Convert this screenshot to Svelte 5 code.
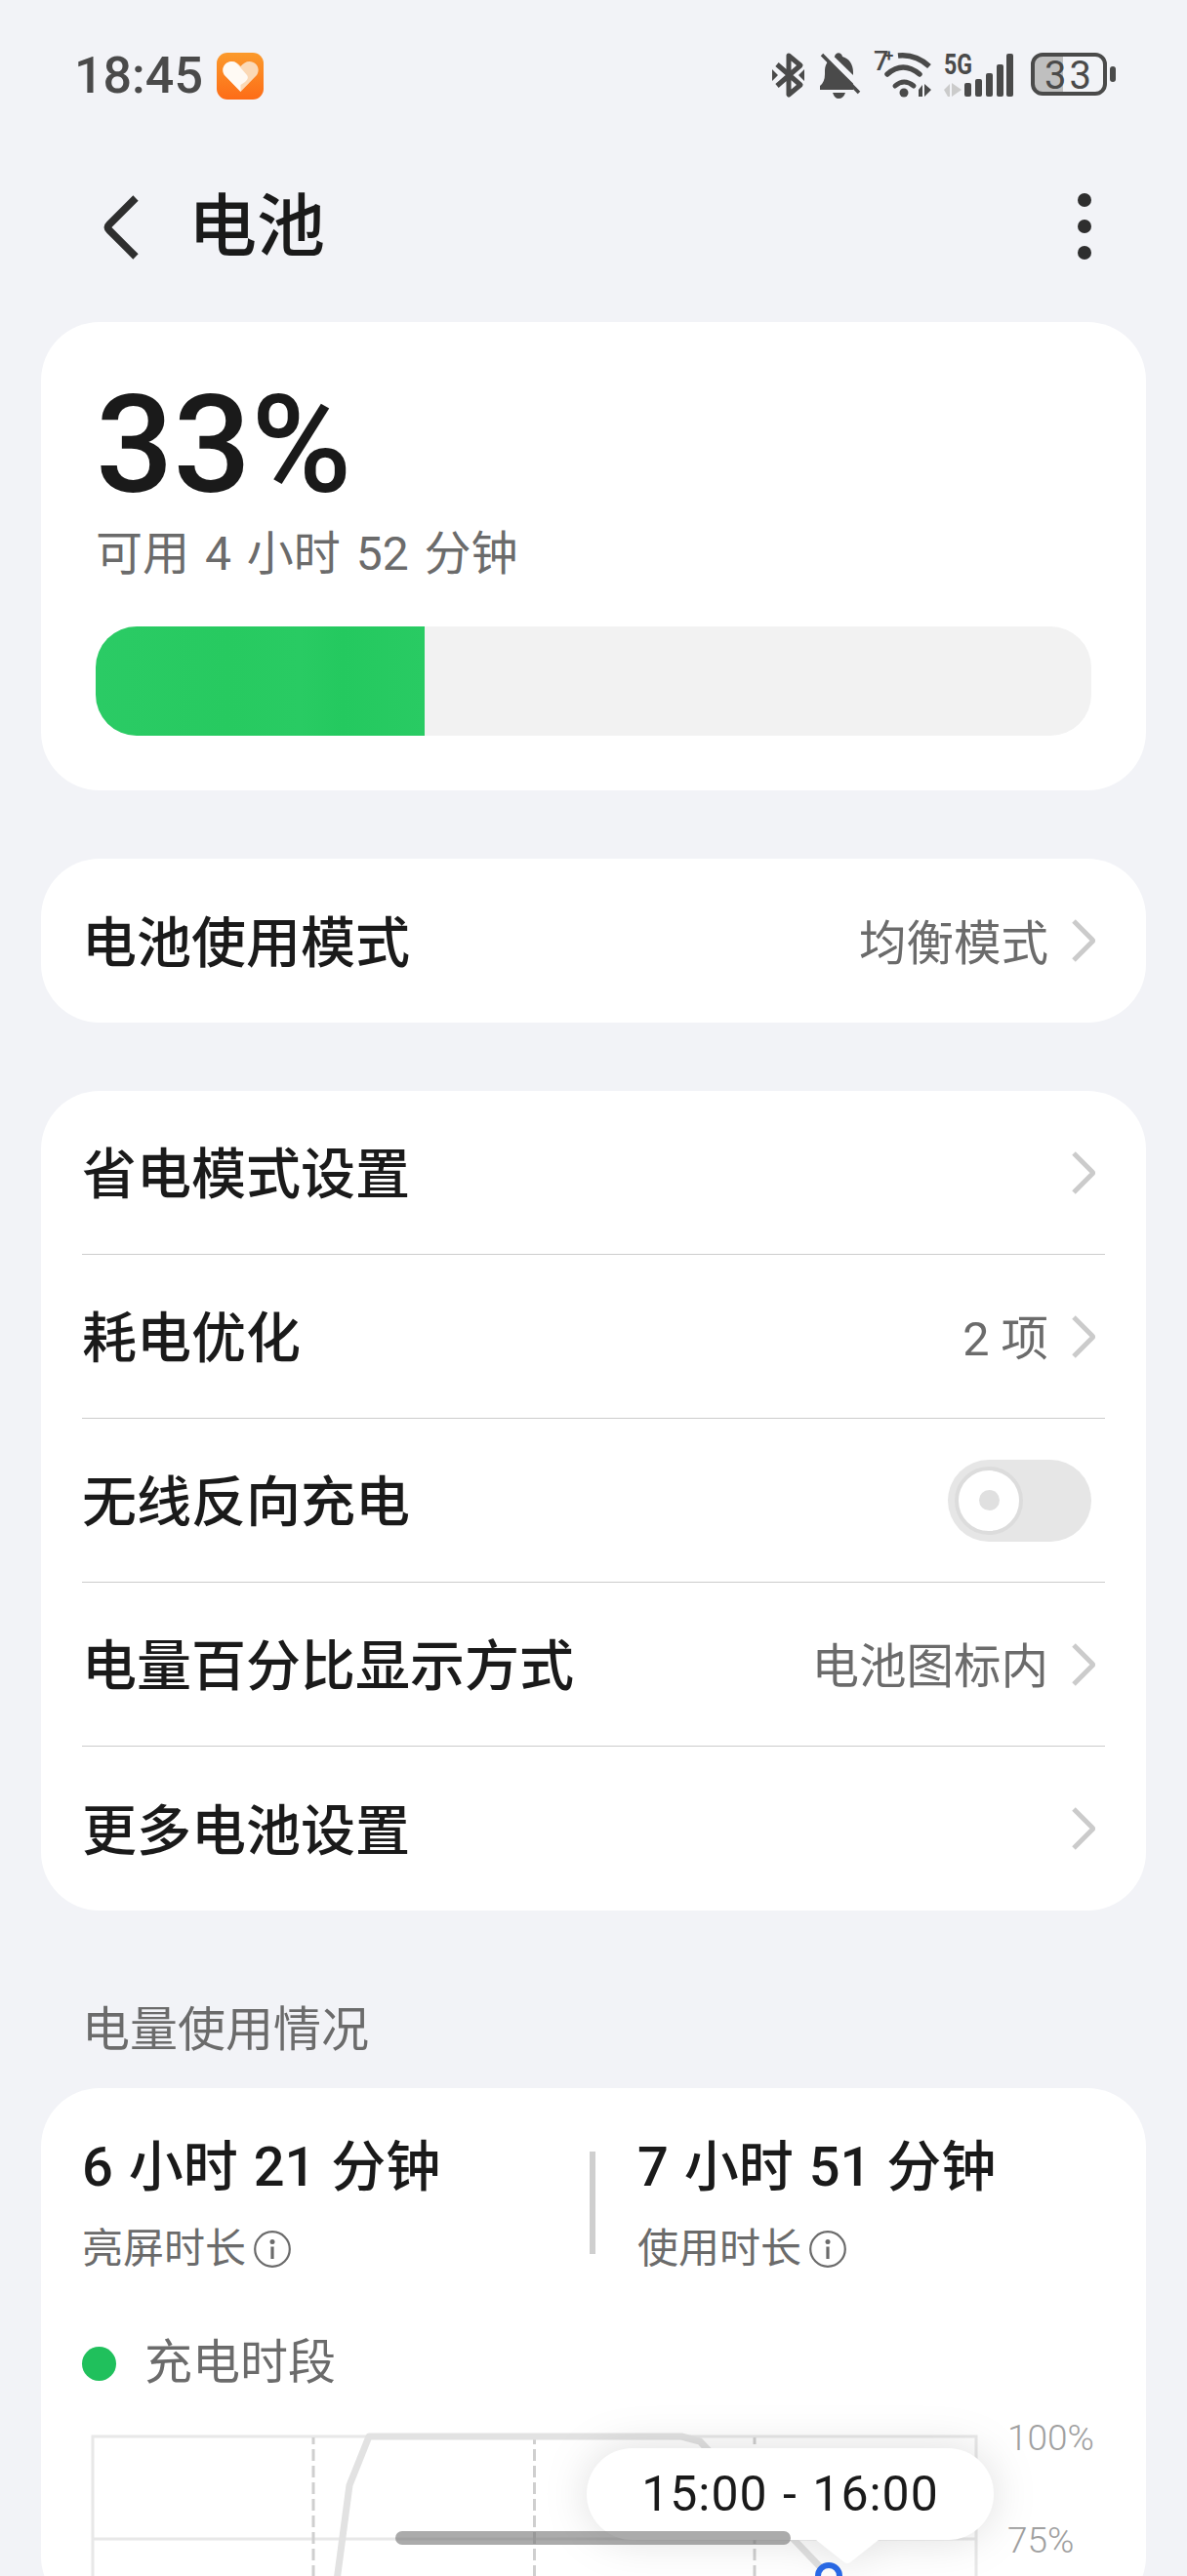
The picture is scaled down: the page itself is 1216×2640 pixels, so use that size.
<script>
  const rows = [
    { label: '省电模式设置', value: '' },
    { label: '耗电优化', value: '2 项' },
    { label: '无线反向充电', toggle: true },
    { label: '电量百分比显示方式', value: '电池图标内' },
    { label: '更多电池设置', value: '' }
  ];

  const stats = [
    { time: '6 小时 21 分钟', label: '亮屏时长' },
    { time: '7 小时 51 分钟', label: '使用时长' }
  ];

  // dashed hour markers of the chart, in page x
  const hours = [321, 547.5, 773];
</script>

{#snippet chevron()}
  <svg class="chev" width="24" height="44" viewBox="0 0 24 44" aria-hidden="true">
    <path d="M2 2 L21 21 Q22 22 21 23 L2 42" fill="none" stroke="#cbcbcb" stroke-width="5"/>
  </svg>
{/snippet}

{#snippet info()}
  <svg width="38" height="38" viewBox="0 0 38 38" aria-hidden="true">
    <circle cx="19" cy="19" r="17.8" fill="none" stroke="#6b6b6b" stroke-width="2.2"/>
    <circle cx="19" cy="11.5" r="2.5" fill="#6b6b6b"/>
    <rect x="17.4" y="16.5" width="3.2" height="12.5" fill="#6b6b6b"/>
  </svg>
{/snippet}

<div class="page">
  <div class="status">
    <div class="st-left">
      <span class="time">18:45</span>
      <svg width="48" height="48" viewBox="0 0 48 48" aria-hidden="true">
        <defs>
          <linearGradient id="appbg" x1="0" y1="0" x2="0" y2="1">
            <stop offset="0" stop-color="#fb9a2c"/>
            <stop offset="1" stop-color="#fd6c17"/>
          </linearGradient>
        </defs>
        <rect width="48" height="48" rx="11" fill="url(#appbg)"/>
        <path d="M24.5 40 L8 23 C3.5 16 9 9 15.5 9 C19 9 22 11 24.5 14 C27 11 30 9 33.5 9 C40 9 45.5 16 41 23 Z" fill="#fbd9b6"/>
        <path d="M24.5 40 L8 23 C3.5 16 9 9 15.5 9 C18 9 20 10 21.5 12 L31 23 C33 26 31 28 29 30 L24.5 33 Z" fill="#fff" opacity="0.85"/>
      </svg>
    </div>
    <svg class="st-right" width="365" height="66" viewBox="785 40 365 66" aria-hidden="true">
      <!-- bluetooth -->
      <path d="M796 66 L820 87 L808 97 V57 L820 67 L796 88" fill="none" stroke="#4a4a4a" stroke-width="5" stroke-linejoin="round"/>
      <path d="M791 71 L797 77 L791 83 Z M824 71 L818 77 L824 83 Z" fill="#4a4a4a"/>
      <!-- muted bell -->
      <path d="M840 92 V88 Q845 84 845 76 V72 C845 64 851 60 855 58 C856 53 862 53 863 58 C870 60 874 66 874 74 V92 Z" fill="#4a4a4a"/>
      <path d="M853 95 H866 Q864 101 859 101 Q855 101 853 95 Z" fill="#4a4a4a"/>
      <path d="M846 54 L886 93" stroke="#f2f3f7" stroke-width="6"/>
      <path d="M842 56 L880 95" stroke="#4a4a4a" stroke-width="3.5"/>
      <!-- wifi -->
      <text x="895" y="72" class="s7">7</text>
      <text x="906" y="63" class="splus">+</text>
      <path d="M920 57 Q938 55 952 68" fill="none" stroke="#4a4a4a" stroke-width="5.5"/>
      <path d="M909 76 Q925 62 942 76" fill="none" stroke="#4a4a4a" stroke-width="5.5" stroke-linecap="round"/>
      <path d="M917 88 Q926 80 936 88" fill="none" stroke="#4a4a4a" stroke-width="5" stroke-linecap="round"/>
      <circle cx="926" cy="95" r="4.5" fill="#4a4a4a"/>
      <path d="M941 92 L945 87 V99 H941 Z M947 86 V99 L954 92 Z" fill="#4a4a4a"/>
      <!-- 5G -->
      <text x="967" y="76" class="s5g" textLength="29" lengthAdjust="spacingAndGlyphs">5G</text>
      <path d="M967 92 L973 86 V99 H971 Z M975 85 V99 L985 92 Z" fill="#cbcbcb"/>
      <!-- signal -->
      <rect x="988" y="85" width="7" height="14" rx="2" fill="#4a4a4a"/>
      <rect x="999" y="81" width="7" height="18" rx="2" fill="#4a4a4a"/>
      <rect x="1010" y="75" width="7" height="24" rx="2" fill="#4a4a4a"/>
      <rect x="1021" y="66" width="7" height="33" rx="2" fill="#4a4a4a"/>
      <rect x="1031" y="55" width="7" height="44" rx="2" fill="#4a4a4a"/>
      <!-- battery -->
      <path d="M1089 56 H1068 Q1058 56 1058 66 V86 Q1058 96 1068 96 H1089 Z" fill="#bfbfbf"/>
      <rect x="1058" y="56" width="74" height="40" rx="10" fill="none" stroke="#4a4a4a" stroke-width="4"/>
      <text x="1095.5" y="91" class="s33" text-anchor="middle">33</text>
      <rect x="1137" y="68" width="6" height="16" rx="3" fill="#4a4a4a"/>
    </svg>
  </div>

  <div class="header">
    <svg width="38" height="66" viewBox="0 0 38 66" aria-hidden="true">
      <path d="M34 3 L7 30 Q4 33 7 36 L34 63" fill="none" stroke="#2e2e2e" stroke-width="7.5"/>
    </svg>
    <h1>电池</h1>
    <div class="more">
      <span></span><span></span><span></span>
    </div>
  </div>

  <section class="card hero">
    <div class="pct">33%</div>
    <div class="remain">可用 4 小时 52 分钟</div>
    <div class="bar"><div class="fill" style="width: 33%"></div></div>
  </section>

  <section class="card">
    <div class="row last">
      <span class="label">电池使用模式</span>
      <span class="value">均衡模式</span>
      {@render chevron()}
    </div>
  </section>

  <section class="card">
    {#each rows as r, i}
      <div class="row" class:last={i === rows.length - 1}>
        <span class="label">{r.label}</span>
        {#if r.toggle}
          <div class="toggle"><div class="knob"><i></i></div></div>
        {:else}
          {#if r.value}<span class="value">{r.value}</span>{/if}
          {@render chevron()}
        {/if}
      </div>
    {/each}
  </section>

  <div class="section-title">电量使用情况</div>

  <section class="card usage">
    <div class="stats">
      {#each stats as s, i}
        {#if i > 0}<div class="vline"></div>{/if}
        <div class="stat">
          <div class="stat-time">{s.time}</div>
          <div class="stat-label">{s.label}{@render info()}</div>
        </div>
      {/each}
    </div>

    <div class="legend"><i class="dot"></i>充电时段</div>

    <div class="chart">
      <!-- viewBox keeps page coordinates so the curve reads off the screenshot -->
      <svg width="1048" height="210" viewBox="84 2470 1048 210" aria-hidden="true">
        <path d="M95 2680 V2497 H1000 V2680" fill="none" stroke="#e8e8e8" stroke-width="3"/>
        <path d="M95 2602 H1000" stroke="#e8e8e8" stroke-width="3"/>
        {#each hours as x}
          <path d="M{x} 2498 V2680" stroke="#cfcfcf" stroke-width="3" stroke-dasharray="12 5" stroke-dashoffset="5"/>
        {/each}
        <path d="M345 2645 L358 2547 L378 2497 H698 L717 2502 L849 2640" fill="none" stroke="#e2e2e2" stroke-width="7" stroke-linejoin="round"/>
        <circle cx="849" cy="2640" r="11" fill="#fff" stroke="#2a6bea" stroke-width="6"/>
        <text x="1032" y="2511" class="pct-axis">100%</text>
        <text x="1032" y="2616" class="pct-axis">75%</text>
      </svg>
      <div class="tip">
        <div class="bubble">15:00 - 16:00</div>
        <svg class="notch" width="64" height="25" viewBox="0 0 64 25" aria-hidden="true">
          <path d="M0 0 H64 L35 23 Q32 25 29 23 Z" fill="#fff"/>
        </svg>
      </div>
    </div>
  </section>

  <div class="scrollbar"></div>
</div>

<style>
  :global(body) { margin: 0; background: #f2f3f7; }
  .page {
    position: relative;
    width: 1216px;
    height: 2640px;
    overflow: hidden;
    background: #f2f3f7;
    font-family: Roboto, "Noto Sans CJK SC", sans-serif;
    color: #1a1a1a;
  }

  .status {
    display: flex;
    justify-content: space-between;
    align-items: flex-start;
    height: 102px;
    padding: 40px 66px 0 76px;
    box-sizing: border-box;
  }
  .st-left { display: flex; align-items: center; gap: 14px; margin-top: 14px; height: 48px; }
  .time { font-size: 52px; line-height: 48px; font-weight: 500; color: #4a4a4a; }
  .st-right { display: block; }
  .s7 { font: 500 27px Roboto, sans-serif; fill: #4a4a4a; }
  .splus { font: 700 17px Roboto, sans-serif; fill: #4a4a4a; }
  .s5g { font: 700 29px Roboto, sans-serif; fill: #4a4a4a; }
  .s33 { font: 400 40px Roboto, sans-serif; letter-spacing: 3px; fill: #4a4a4a; }

  .header {
    display: flex;
    align-items: center;
    height: 194px;
    margin-top: 34px;
    padding: 0 98px 0 105px;
  }
  h1 { margin: 0 0 0 50px; flex: 1; font-size: 70px; line-height: 84px; font-weight: 500; }
  .more { display: flex; flex-direction: column; gap: 13px; margin-bottom: 2px; }
  .more span { width: 14px; height: 14px; border-radius: 50%; background: #2e2e2e; }

  .card {
    margin: 70px 42px 0;
    background: #fff;
    border-radius: 60px;
  }
  .hero { margin-top: 0; padding: 59px 56px 56px; }
  .pct { font-size: 140px; line-height: 135px; font-weight: 500; }
  .remain { margin-top: 14px; font-size: 48px; line-height: 60px; word-spacing: 4px; color: #6b6b6b; }
  .bar { margin-top: 44px; height: 112px; border-radius: 42px; background: #f2f2f2; overflow: hidden; }
  .fill {
    height: 100%;
    background: linear-gradient(90deg, #2bcb65 0%, #27ca60 40%, #29cb63 62%, #24c95f 75%, #29cb63 100%);
  }

  .row {
    display: flex;
    align-items: center;
    box-sizing: border-box;
    height: 168px;
    margin: 0 42px;
    padding-right: 10px;
    border-bottom: 1px solid #cccccc;
  }
  .row.last { border-bottom: 0; }
  .label { flex: 1; margin-bottom: 6px; font-size: 56px; font-weight: 500; }
  .value { margin: 0 24px 3px 0; font-size: 48.5px; color: #6b6b6b; }
  .chev { display: block; }

  .toggle {
    display: flex;
    align-items: center;
    box-sizing: border-box;
    width: 147px;
    height: 84px;
    margin-right: 4px;
    padding-left: 7px;
    border-radius: 42px;
    background: #e6e6e6;
  }
  .knob {
    display: flex;
    align-items: center;
    justify-content: center;
    box-sizing: border-box;
    width: 70px;
    height: 70px;
    border: 4px solid #dcdcdc;
    border-radius: 50%;
    background: #fff;
  }
  .knob i { width: 21px; height: 21px; border-radius: 50%; background: #e0e0e0; }

  .section-title {
    margin: 96px 84px 32px;
    font-size: 49px;
    line-height: 54px;
    color: #6b6b6b;
  }

  .usage { margin-top: 0; padding: 51px 42px 0; }
  .stats { display: flex; }
  .stat:first-child { width: 520px; }
  .vline { width: 6px; height: 105px; margin: 14px 43px 0 0; background: #cfcfcf; }
  .stat-time { font-size: 56px; line-height: 60px; font-weight: 500; word-spacing: 2px; }
  .stat-label {
    display: flex;
    align-items: center;
    gap: 8px;
    margin-top: 32px;
    font-size: 42px;
    line-height: 44px;
    color: #6b6b6b;
  }

  .legend {
    display: flex;
    align-items: center;
    gap: 29px;
    margin-top: 70px;
    font-size: 49px;
    line-height: 50px;
    color: #6b6b6b;
  }
  .dot { width: 35px; height: 35px; border-radius: 50%; background: #20c05c; }

  .chart { position: relative; margin-top: 23px; height: 210px; }
  .chart svg { display: block; }
  .pct-axis { font: 300 37px Roboto, sans-serif; fill: #a0a0a0; }

  .tip {
    position: absolute;
    left: 517px;
    top: 39px;
    width: 417px;
    filter: drop-shadow(0 0 22px rgba(0, 0, 0, 0.13));
  }
  .bubble {
    height: 94px;
    border-radius: 47px;
    background: #fff;
    font-size: 50px;
    line-height: 94px;
    letter-spacing: 1px;
    word-spacing: 2px;
    text-align: center;
    font-weight: 400;
  }
  .notch { position: absolute; left: 235px; top: 94px; }

  .scrollbar {
    position: absolute;
    left: 405px;
    top: 2594px;
    width: 405px;
    height: 14px;
    border-radius: 7px;
    background: rgba(120, 120, 120, 0.62);
  }
</style>
